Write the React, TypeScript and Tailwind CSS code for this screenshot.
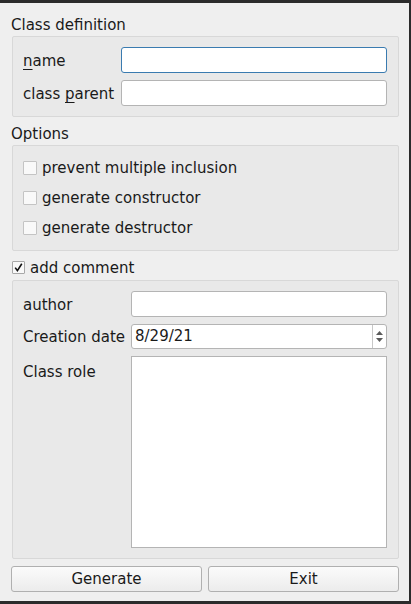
import React from "react";

const font = { fontFamily: '"DejaVu Sans", "Liberation Sans", sans-serif' };

const Input = (props: { focused?: boolean; className?: string; children?: React.ReactNode }) => (
  <div
    className={`bg-white rounded-[3px] border ${props.focused ? "border-[#3a7bb0]" : "border-[#b4b4b4]"} ${props.className || ""}`}
  >
    {props.children}
  </div>
);

const CheckRow = (props: { label: string }) => (
  <div className="h-[30px] flex items-center">
    <div className="w-[14px] h-[14px] bg-[#f9f9f9] border border-[#c4c4c4] rounded-[1px]" />
    <span className="ml-[5px]">{props.label}</span>
  </div>
);

const GroupTitle = (props: { text: string; className?: string }) => (
  <div className={`pl-[11px] flex items-center ${props.className || ""}`}>{props.text}</div>
);

export default function App() {
  return (
    <div className="w-[411px] h-[604px] bg-[#2b2b2b] pt-[3px] pr-[2px] pb-[3px]" style={font}>
      <div className="h-full bg-[#efefef] text-[15px] text-[#1a1a1a] flex flex-col">
        <GroupTitle text="Class definition" className="h-[33px] pt-[12px]" />
        <div className="ml-[12px] mr-[10px] border border-[#d8d8d8] rounded-[2px] bg-[#e9e9e9] pt-[10px] pb-[10px] pl-[10px] pr-[11px] flex flex-col gap-[7px]">
          <div className="flex items-center h-[26px]">
            <span className="w-[98px] pt-[2px]">
              <span className="underline underline-offset-[3px]">n</span>ame
            </span>
            <Input focused className="flex-1 h-[26px]" />
          </div>
          <div className="flex items-center h-[26px]">
            <span className="w-[98px] pt-[2px]">
              class <span className="underline underline-offset-[3px]">p</span>arent
            </span>
            <Input className="flex-1 h-[26px]" />
          </div>
        </div>
        <GroupTitle text="Options" className="h-[28px] pt-[6px]" />
        <div className="ml-[12px] mr-[10px] border border-[#d8d8d8] rounded-[2px] bg-[#e9e9e9] pt-[7px] pl-[10px] h-[106px] flex flex-col">
          <CheckRow label="prevent multiple inclusion" />
          <CheckRow label="generate constructor" />
          <CheckRow label="generate destructor" />
        </div>
        <div className="h-[29px] pl-[12px] flex items-center pt-[4px]">
          <div className="w-[13px] h-[13px] bg-[#f9f9f9] border border-[#a8a8a8] rounded-[1px] flex items-center justify-center">
            <svg width="11" height="11" viewBox="0 0 11 11">
              <path d="M2.2 5.6 L4.4 8.6 L8.8 1.8" fill="none" stroke="#111" strokeWidth="1.6" />
            </svg>
          </div>
          <span className="ml-[5px] pt-[1px]">add comment</span>
        </div>
        <div className="ml-[12px] mr-[10px] border border-[#d8d8d8] rounded-[2px] bg-[#e9e9e9] pt-[10px] pb-[10px] pl-[10px] pr-[11px] h-[279px] flex flex-col gap-[7px]">
          <div className="flex items-center h-[26px]">
            <span className="w-[108px] pt-[2px]">author</span>
            <Input className="flex-1 h-[26px]" />
          </div>
          <div className="flex items-center h-[25px]">
            <span className="w-[108px] pt-[1px]">Creation date</span>
            <Input className="flex-1 h-[25px] flex items-stretch">
              <div className="flex-1 pl-[3px] flex items-center">8/29/21</div>
              <div className="w-[14px] border-l border-[#c8c8c8] flex flex-col items-center justify-center gap-[3px]">
                <svg width="7" height="4" viewBox="0 0 7 4">
                  <path d="M0 4 L3.5 0 L7 4 Z" fill="#5a5a5a" />
                </svg>
                <svg width="7" height="4" viewBox="0 0 7 4">
                  <path d="M0 0 L7 0 L3.5 4 Z" fill="#5a5a5a" />
                </svg>
              </div>
            </Input>
          </div>
          <div className="flex items-start flex-1">
            <span className="w-[108px] pt-[5px]">Class role</span>
            <div className="flex-1 h-[192px] bg-white border border-[#b4b4b4]" />
          </div>
        </div>
        <div className="ml-[11px] mr-[10px] mt-[7px] flex gap-[6px]">
          <button className="flex-1 h-[26px] rounded-[3px] border border-[#b0b0b0] bg-gradient-to-b from-[#fbfbfb] to-[#ececec] text-[#1a1a1a]">
            Generate
          </button>
          <button className="flex-1 h-[26px] rounded-[3px] border border-[#b0b0b0] bg-gradient-to-b from-[#fbfbfb] to-[#ececec] text-[#1a1a1a]">
            Exit
          </button>
        </div>
      </div>
    </div>
  );
}
